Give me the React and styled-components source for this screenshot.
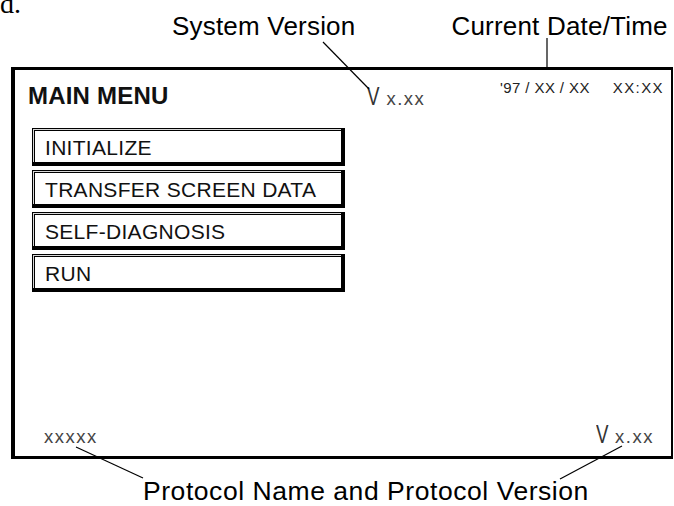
import React from 'react'
import styled, { createGlobalStyle } from 'styled-components'

const GlobalStyle = createGlobalStyle`
  html, body {
    margin: 0;
    padding: 0;
    background: #fff;
  }
  body {
    font-family: "Liberation Sans", Arial, sans-serif;
    color: #000;
  }
`

const menuItems = ['INITIALIZE', 'TRANSFER SCREEN DATA', 'SELF-DIAGNOSIS', 'RUN']

function App() {
  return (
    <>
      <GlobalStyle />
      <Page>
        <TopArea>
          <CutText>d.</CutText>
          <Callout $indent={148}>System Version</Callout>
          <Callout $indent={96}>Current Date/Time</Callout>
        </TopArea>

        <Screen>
          <ScreenHeader>
            <Title>MAIN MENU</Title>
            <Version $indent={199}>
              <BigV>V</BigV>
              <Small>x.xx</Small>
            </Version>
            <DateTime>
              <span>'97 / XX / XX</span>
              <Clock>XX:XX</Clock>
            </DateTime>
          </ScreenHeader>

          <Menu>
            {menuItems.map((item) => (
              <MenuButton key={item}>{item}</MenuButton>
            ))}
          </Menu>

          <ScreenFooter>
            <Small>xxxxx</Small>
            <Version>
              <BigV>V</BigV>
              <Small>x.xx</Small>
            </Version>
          </ScreenFooter>
        </Screen>

        <BottomCallout>Protocol Name and Protocol Version</BottomCallout>

        <Leaders width="674" height="506" viewBox="0 0 674 506">
          <line x1="323" y1="42" x2="369" y2="89" />
          <line x1="547" y1="38" x2="547" y2="68" />
          <line x1="76" y1="447" x2="143" y2="478" />
          <line x1="622" y1="446" x2="560" y2="479" />
        </Leaders>
      </Page>
    </>
  )
}

export default App

const Page = styled.div`
  position: relative;
  width: 674px;
  height: 506px;
  overflow: hidden;
  background: #fff;
  display: flex;
  flex-direction: column;
`

const TopArea = styled.div`
  height: 67px;
  display: flex;
  align-items: flex-start;
`

const CutText = styled.div`
  width: 24px;
  margin-top: -11px;
  font-family: "Liberation Serif", "Times New Roman", serif;
  font-size: 28px;
  line-height: 30px;
`

const Callout = styled.div`
  margin-left: ${(p) => p.$indent}px;
  padding-top: 11px;
  font-size: 26px;
  line-height: 30px;
  letter-spacing: 0.2px;
  white-space: nowrap;
`

const Screen = styled.div`
  margin-left: 11px;
  width: 662px;
  height: 393px;
  box-sizing: border-box;
  border: solid #000;
  border-width: 3px 2px 3px 4px;
  padding: 12px 0 8px 13px;
  display: flex;
  flex-direction: column;
  color: #111;
`

const ScreenHeader = styled.div`
  display: flex;
  align-items: flex-start;
  height: 28px;
`

const Title = styled.div`
  font-size: 24px;
  font-weight: bold;
  line-height: 28px;
  letter-spacing: 0.2px;
`

const Version = styled.div`
  display: flex;
  align-items: baseline;
  margin-left: ${(p) => p.$indent || 0}px;
  margin-top: ${(p) => (p.$indent ? 3 : 0)}px;
`

const BigV = styled.span`
  display: inline-block;
  font-size: 26px;
  line-height: 22px;
  width: 14px;
  margin-right: 5px;
  transform: scaleX(0.72);
  transform-origin: left;
  color: #333;
`

const Small = styled.span`
  font-size: 18.5px;
  line-height: 22px;
  letter-spacing: 1.5px;
  color: #444;
`

const DateTime = styled.div`
  margin-left: auto;
  margin-right: 7px;
  margin-top: -4px;
  display: flex;
  gap: 23px;
  font-size: 15px;
  line-height: 20px;
  letter-spacing: 0.4px;
  color: #222;
`

const Clock = styled.span`
  letter-spacing: 1.4px;
`

const Menu = styled.div`
  margin-top: 18px;
  margin-left: 4px;
  display: flex;
  flex-direction: column;
  gap: 4px;
`

const MenuButton = styled.div`
  width: 313px;
  height: 38px;
  box-sizing: border-box;
  border: solid #000;
  border-width: 1px 4px 4px 1px;
  box-shadow: inset 1px 1px 0 #d8d8d8, inset 2px 2px 0 #000;
  padding: 4px 0 0 12px;
  font-size: 21px;
  line-height: 29px;
  letter-spacing: 0.3px;
  color: #111;
  white-space: nowrap;
`

const ScreenFooter = styled.div`
  margin-top: auto;
  margin-right: 17px;
  margin-left: 16px;
  display: flex;
  justify-content: space-between;
  align-items: baseline;
`

const BottomCallout = styled.div`
  margin-top: 17px;
  margin-left: 143px;
  font-size: 26.5px;
  line-height: 30px;
  letter-spacing: 0.55px;
  white-space: nowrap;
`

const Leaders = styled.svg`
  position: absolute;
  left: 0;
  top: 0;
  pointer-events: none;

  line {
    stroke: #000;
    stroke-width: 1.2;
  }
`
